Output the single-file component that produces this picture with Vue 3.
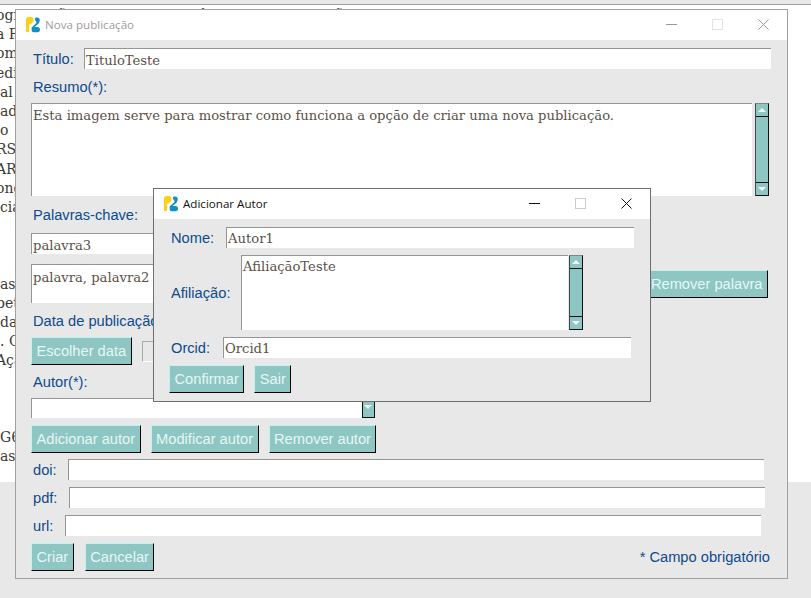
<script setup>
const behind = [
  { text: 'ogramação em Revista de Ciência da Computação', cls: 'cut' }, { text: 'a P', cls: 'cut' }, { text: 'om', cls: 'cut' }, { text: 'edi', cls: 'cut' },
  { text: 'al', cls: '' }, { text: 'ad', cls: '' }, { text: 'o', cls: '' }, { text: 'RS-', cls: 'cut' },
  { text: 'AR', cls: 'cut' }, { text: 'ong', cls: 'cut' }, { text: 'cia', cls: '' }, { text: '', cls: '' },
  { text: '', cls: '' }, { text: '', cls: '' }, { text: 'as', cls: '' }, { text: 'pet', cls: 'cut' },
  { text: 'da', cls: '' }, { text: '. O', cls: '' }, { text: 'Açã', cls: 'cut' }, { text: '', cls: '' },
  { text: '', cls: '' }, { text: '', cls: '' }, { text: 'G6', cls: '' }, { text: 'as', cls: '' }
]
const authorButtons = ['Adicionar autor', 'Modificar autor', 'Remover autor']
const links = [
  { label: 'doi:', value: 35 },
  { label: 'pdf:', value: 36 },
  { label: 'url:', value: 32 }
]
</script>

<template>
  <div class="desktop">
    <div class="page">
      <p v-for="(line, i) in behind" :key="i" :class="line.cls">{{ line.text }}</p>
    </div>

    <section class="window main">
      <header class="titlebar">
        <svg class="logo" viewBox="0 0 16 17">
          <path d="M1 3.5Q1 1 3.5 1H6Q8.5 1 8.5 3.5V5.5L5.5 8.5H4.2V15Q4.2 16.2 2.6 16.2 1 16.2 1 15Z" fill="#fdd017" />
          <path d="M11 1.5Q14.8 1 14.8 4.5 14.8 7 12 9L9.6 11H13Q15 11 15 13.5 15 16.2 12.5 16.2H8.8Q6.6 16.2 6.6 14V11.5L11 7.5Q12 6.4 11.2 5.5 10.2 4.8 9.8 3.6 9.8 1.9 11 1.5Z" fill="#0f8fc4" />
        </svg>
        <span class="title">Nova publicação</span>
        <div class="controls faded">
          <i class="min"></i><i class="max"></i>
          <svg class="close" viewBox="0 0 11 11"><path d="M.5.5l10 10M10.5.5l-10 10" /></svg>
        </div>
      </header>
      <div class="body">
        <div class="row title-row">
          <label>Título:</label>
          <div class="field low title-input">TituloTeste</div>
        </div>
        <label class="block resumo">Resumo(*):</label>
        <div class="area-row">
          <div class="field resumo-area">Esta imagem serve para mostrar como funciona a opção de criar uma nova publicação.</div>
          <div class="scrollbar">
            <b class="up"></b><b class="thumb"></b><b class="down"></b>
          </div>
        </div>
        <label class="block palavras">Palavras-chave:</label>
        <div class="field low palavra-input">palavra3</div>
        <div class="palavra-row">
          <div class="field palavra-list">palavra, palavra2</div>
          <button class="btn">Remover palavra</button>
        </div>
        <label class="block data">Data de publicação:</label>
        <div class="row data-row">
          <button class="btn">Escolher data</button>
          <div class="date-box"></div>
        </div>
        <label class="block autor">Autor(*):</label>
        <div class="combo">
          <div class="field combo-text"></div>
          <b class="down"></b>
        </div>
        <div class="row btn-row">
          <button v-for="b in authorButtons" :key="b" class="btn">{{ b }}</button>
        </div>
        <div v-for="l in links" :key="l.label" class="row link-row">
          <label :style="{ width: l.value + 'px' }">{{ l.label }}</label>
          <div class="field link-input"></div>
        </div>
        <div class="row foot">
          <button class="btn">Criar</button>
          <button class="btn">Cancelar</button>
          <span class="note">* Campo obrigatório</span>
        </div>
      </div>
    </section>

    <section class="window dialog">
      <header class="titlebar">
        <svg class="logo" viewBox="0 0 16 17">
          <path d="M1 3.5Q1 1 3.5 1H6Q8.5 1 8.5 3.5V5.5L5.5 8.5H4.2V15Q4.2 16.2 2.6 16.2 1 16.2 1 15Z" fill="#fdd017" />
          <path d="M11 1.5Q14.8 1 14.8 4.5 14.8 7 12 9L9.6 11H13Q15 11 15 13.5 15 16.2 12.5 16.2H8.8Q6.6 16.2 6.6 14V11.5L11 7.5Q12 6.4 11.2 5.5 10.2 4.8 9.8 3.6 9.8 1.9 11 1.5Z" fill="#0f8fc4" />
        </svg>
        <span class="title">Adicionar Autor</span>
        <div class="controls">
          <i class="min"></i><i class="max"></i>
          <svg class="close" viewBox="0 0 11 11"><path d="M.5.5l10 10M10.5.5l-10 10" /></svg>
        </div>
      </header>
      <div class="body">
        <div class="row nome-row">
          <label>Nome:</label>
          <div class="field nome-input">Autor1</div>
        </div>
        <div class="row afil-row">
          <label>Afiliação:</label>
          <div class="field afil-area">AfiliaçãoTeste</div>
          <div class="scrollbar">
            <b class="up"></b><b class="thumb"></b><b class="down"></b>
          </div>
        </div>
        <div class="row orcid-row">
          <label>Orcid:</label>
          <div class="field orcid-input">Orcid1</div>
        </div>
        <div class="row dlg-btns">
          <button class="btn">Confirmar</button>
          <button class="btn">Sair</button>
        </div>
      </div>
    </section>
  </div>
</template>

<style>
html, body { margin: 0; background: #e8e8e8; }
</style>

<style scoped>
.desktop {
  position: relative;
  width: 811px;
  height: 598px;
  overflow: hidden;
  background: #e8e8e8;
}

.page {
  margin-top: 4px;
  height: 476px;
  border-top: 1px solid #a0a0a0;
  background: #fff;
  overflow: hidden;
  padding-top: 1px;
  font: 14px/19.2px "DejaVu Serif", "Liberation Serif", serif;
  color: #3a3a3a;
}
.page p { margin: 0; height: 19.2px; white-space: nowrap; }
.page p.cut { margin-left: -4px; }

.window {
  position: absolute;
  box-sizing: border-box;
  background: #e8e8e8;
  display: flex;
  flex-direction: column;
}
.main { left: 15px; top: 9px; width: 773px; height: 570px; border: 1px solid #a0a0a0; }
.dialog { left: 153px; top: 188px; width: 498px; height: 214px; border: 1px solid #6e6e6e; }

.titlebar {
  box-sizing: border-box;
  height: 30px;
  padding-bottom: 1px;
  flex: none;
  background: #fff;
  display: flex;
  align-items: center;
}
.logo { width: 16px; height: 17px; margin-left: 9px; flex: none; }
.title { margin-left: 4px; font: 11.6px "Open Sans", sans-serif; color: #111; }
.main .title { color: #a09a9e; }
.controls { margin-left: auto; display: flex; align-items: center; }
.controls .min { width: 11px; height: 1px; background: #111; margin-right: 35px; }
.controls .max { width: 9px; height: 9px; border: 1px solid #ccc; margin-right: 35px; }
.close { width: 11px; height: 11px; margin-right: 18px; fill: none; stroke: #111; stroke-width: 1; }
.faded .min { background: #999; }
.faded .max { border-color: #e4e4e4; }
.faded .close { stroke: #999; }

label {
  font: 14.67px/18px "Liberation Sans", Arial, sans-serif;
  color: #0e4a8c;
}
label.block { display: block; margin-left: 2px; }

.field {
  box-sizing: border-box;
  background: #fff;
  border-top: 1px solid #959595;
  border-left: 1px solid #959595;
  padding: 1px 0 0 1px;
  font: 13.15px/19px "DejaVu Serif", "Liberation Serif", serif;
  color: #5a5048;
  white-space: nowrap;
  overflow: hidden;
}
.field.low { padding-top: 2px; }

.row { display: flex; align-items: center; }

.btn {
  box-sizing: border-box;
  height: 28px;
  padding: 0 4.5px;
  background: #8ec6c3;
  border: 1px solid;
  border-color: #c4f0ee #000 #000 #c4f0ee;
  font: 14.67px "Liberation Sans", Arial, sans-serif;
  color: #e6f6f5;
  flex: none;
}

.scrollbar {
  box-sizing: border-box;
  width: 14px;
  flex: none;
  display: flex;
  flex-direction: column;
  border: 1px solid #111;
  border-top-color: #7a8a88;
  border-left-color: #3c4a48;
}
.scrollbar .thumb { flex: 1; background: #8ec6c3; border-top: 1px solid #111; border-bottom: 1px solid #111; }
.up, .down {
  height: 12px;
  flex: none;
  position: relative;
  background: #8ec6c3;
}
.up::after, .down::after {
  content: "";
  position: absolute;
  left: 2px;
  top: 4px;
  border: 4px solid transparent;
  border-top: 0;
  border-bottom: 4px solid #f2fbfa;
}
.down::after { border-top: 4px solid #f2fbfa; border-bottom: 0; }

/* main window rows */
.main .body { padding-left: 15px; }
.title-row { margin-top: 8px; height: 21px; }
.title-row label { margin-left: 2px; width: 51px; }
.title-input { width: 687px; height: 21px; }
.resumo { margin-top: 9px; }
.area-row { display: flex; margin-top: 7px; height: 93px; }
.resumo-area { width: 721px; padding: 2px 0 0 1px; }
.area-row .scrollbar { margin-left: 3px; }
.palavras { margin-top: 10px; }
.palavra-input { width: 400px; height: 21px; margin-top: 9px; }
.palavra-row { display: flex; margin-top: 10px; height: 39px; width: 737px; }
.palavra-list { width: 400px; height: 39px; padding-top: 3px; }
.palavra-row .btn { margin-left: auto; margin-top: 6px; }
.data { margin-top: 9px; }
.data-row { margin-top: 7px; }
.date-box { width: 100px; height: 21px; margin-left: 10px; border: 1px solid #fff; border-top-color: #aaa; border-left-color: #aaa; box-sizing: border-box; }
.autor { margin-top: 8px; }
.combo { display: flex; margin-top: 7px; width: 344px; height: 20px; }
.combo-text { flex: 1; }
.combo .down { width: 13px; height: 20px; box-sizing: border-box; border: 1px solid #111; border-top-color: #777; }
.combo .down::after { left: 1px; top: 6px; }
.btn-row { margin-top: 7px; gap: 10px; }
.link-row { margin-top: 7px; height: 21px; }
.btn-row + .link-row { margin-top: 6px; }
.link-row label { margin-left: 2px; }
.link-input { width: 696px; height: 21px; }
.foot { margin-top: 7px; gap: 11px; }
.note {
  margin-left: auto;
  margin-right: 17px;
  font: 14.67px "Liberation Sans", Arial, sans-serif;
  color: #0e4a8c;
}

/* dialog rows */
.dialog .body { padding-left: 15px; }
.nome-row { margin-top: 8px; height: 21px; }
.nome-row label { margin-left: 2px; width: 55px; }
.nome-input { width: 408px; height: 21px; }
.afil-row { margin-top: 7px; height: 75px; align-items: stretch; }
.afil-row label { margin-left: 2px; width: 70px; align-self: center; }
.afil-area { width: 327px; }
.afil-row .scrollbar { margin-left: 1px; }
.orcid-row { margin-top: 7px; height: 21px; }
.orcid-row label { margin-left: 2px; width: 52px; }
.orcid-input { width: 408px; height: 21px; }
.dlg-btns { margin-top: 7px; gap: 10px; }
</style>
